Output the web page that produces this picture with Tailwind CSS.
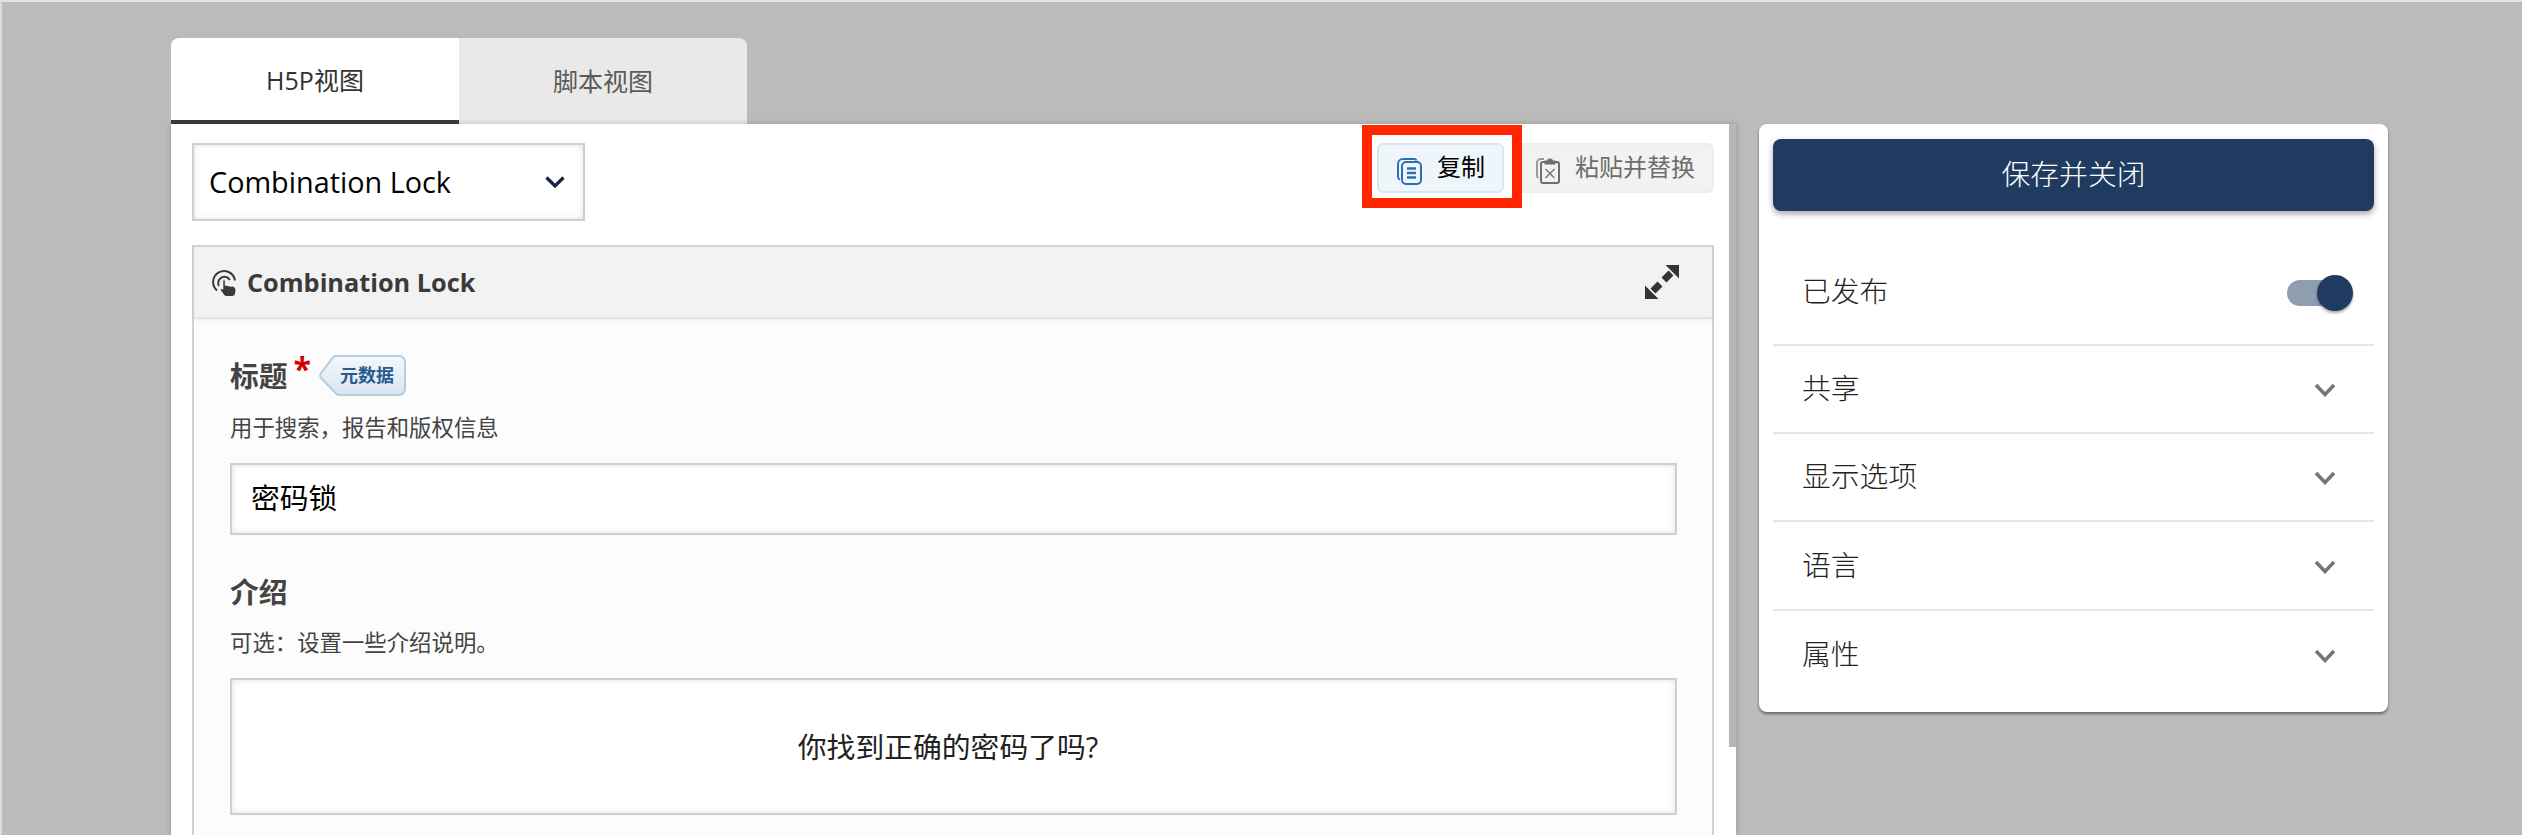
<!DOCTYPE html>
<html lang="zh-CN">
<head>
    <meta charset="UTF-8">
    <meta name="viewport" content="width=device-width, initial-scale=1.0">
    <script src="https://cdn.jsdelivr.net/npm/@tailwindcss/browser@4"></script>
    <title>Combination Lock</title>
</head>
<body class="bg-[#bbbbbb] font-['Open_Sans','Noto_Sans_CJK_SC',sans-serif]">
    <div class="relative flex h-[835px] gap-[23px] overflow-hidden border-l-2 border-t-2 border-l-[#d6dce4] border-t-[#e4e4e4] pl-[169px] pt-[36px]">

        <!-- editor column -->
        <div class="flex w-[1565px] shrink-0 flex-col">
            <div class="flex h-[86px] w-[576px] shrink-0 overflow-hidden rounded-t-lg text-[25px]">
                <div class="flex w-[288px] items-center justify-center border-b-[4px] border-[#3d3d3d] bg-white pt-[4px] text-[#333333]">H5P视图</div>
                <div class="flex w-[288px] items-center justify-center bg-[#e9e9e9] pt-[2px] text-[#5a5a5a]">脚本视图</div>
            </div>

            <div class="relative flex-1 bg-white pl-[21px] pr-[22px] pt-[19px] shadow-[0_0_6px_rgba(0,0,0,0.2)]">
                <div class="absolute right-0 top-0 h-[623px] w-[7px] bg-[#b6b6b6]"></div>

                <div class="flex items-start justify-between">
                    <div class="flex h-[78px] w-[393px] items-center justify-between border-2 border-[#cfcfcf] pl-[15px] pr-[18px] text-[28.800px] text-black shadow-[inset_0_0_6px_rgba(0,0,0,0.12)]">
                        <span>Combination Lock</span>
                        <svg width="20" height="12" viewBox="0 0 20 12" fill="none" stroke="#14263f" stroke-width="3.200"><path d="M1.500 1.500l8.500 8.500 8.500-8.500"/></svg>
                    </div>
                    <div class="flex">
                        <button class="flex h-[50px] w-[127px] items-center rounded-md border-2 border-[#d8e8ea] bg-[#eef6fc] pl-[18px] text-[24px] text-black">
                            <svg class="mt-[6px]" width="25" height="27" viewBox="0 0 25 27" fill="none" stroke="#2c6fb5" stroke-width="2">
                                <path d="M3 21.500A3 3 0 0 1 1 19V6a5 5 0 0 1 5-5h11a3 3 0 0 1 2.600 1.500"/>
                                <rect x="5" y="4" width="19" height="22" rx="4"/>
                                <path d="M10 10.500h9M10 15h9M10 19.500h9" stroke-width="2.400"/>
                            </svg>
                            <span class="mb-[2px] ml-[15px]">复制</span>
                        </button>
                        <button class="ml-[8px] flex h-[50px] w-[202px] items-center rounded-md border-2 border-[#ededed] bg-[#f2f2f2] pl-[22px] text-[24px] text-[#6e6e6e]">
                            <svg class="mt-[5px]" width="25" height="27" viewBox="0 0 25 27" fill="none" stroke="#6e6e6e" stroke-width="2">
                                <path d="M2.500 21A2.500 2.500 0 0 1 1 19V6a4 4 0 0 1 4-4h3" stroke="#9a9a9a"/>
                                <path d="M10 5H7a2 2 0 0 0-2 2v17a2 2 0 0 0 2 2h14a2 2 0 0 0 2-2V7a2 2 0 0 0-2-2h-3"/>
                                <path d="M9.500 6.500h9V4.500h-2.500a2 2 0 0 0-4 0H9.500z" fill="#6e6e6e"/>
                                <path d="M9.500 12l9 9M18.500 12l-9 9" stroke-width="1.200"/>
                            </svg>
                            <span class="mb-[2px] ml-[14px]">粘贴并替换</span>
                        </button>
                    </div>
                </div>

                <div class="mt-[24px] border-x-2 border-t-2 border-[#d2d2d2] bg-[#fcfcfc] pb-[40px]">
                    <div class="flex h-[72px] items-center justify-between border-b-2 border-[#e2e2e2] bg-[#f2f2f2] pl-[18px] pr-[33px] shadow-[0_2px_5px_rgba(0,0,0,0.06)]">
                        <div class="flex items-center gap-[10px] pt-[2px] text-[25.300px] font-bold text-[#3a3a3a]">
                            <svg width="25" height="28" viewBox="0 0 25 28" fill="none" stroke="#3a3a3a" stroke-width="2">
                                <path d="M5 21.500A11 11 0 1 1 23 11.500"/>
                                <path d="M7 17A6 6 0 1 1 17.800 11"/>
                                <path d="M11.300 10.500a1.500 1.500 0 0 1 1.500 1.500v4.500l6.500 1.300a3.200 3.200 0 0 1 4.200 3.200l-.5 3.500a3 3 0 0 1-3 2.500h-5.500a3 3 0 0 1-2.400-1.200l-3.600-5 1-.8 1.800.6v-8.600a1.500 1.500 0 0 1 1.500-1.500z" fill="#3a3a3a" stroke="none"/>
                            </svg>
                            <span>Combination Lock</span>
                        </div>
                        <svg width="34" height="34" viewBox="0 0 34 34" fill="#333333" stroke="none">
                            <path d="M20.500 0H34V13.500z"/>
                            <path d="M0 34V20.500L13.500 34z"/>
                            <path d="M26 8l-7 7M15 19l-7 7" stroke="#333333" stroke-width="7"/>
                        </svg>
                    </div>

                    <div class="pl-[36px] pr-[35px]">
                        <div class="mt-[36px] flex h-[41px] items-center">
                            <span class="text-[28.800px] font-bold text-[#444444]">标题</span>
                            <span class="mb-[14px] ml-[6px] text-[32px] font-bold leading-none text-[#d40000]">*</span>
                            <div class="relative ml-[8px] flex h-[41px] w-[87px] items-center">
                                <svg class="absolute left-0 top-0" width="87" height="41" viewBox="0 0 87 41">
                                    <defs><linearGradient id="tagfill" x1="0" y1="0" x2="0" y2="1"><stop offset="0" stop-color="#f5f8fb"/><stop offset="1" stop-color="#d7e5f1"/></linearGradient></defs>
                                    <path d="M17 1H80a6 6 0 0 1 6 6V34a6 6 0 0 1-6 6H20a5 5 0 0 1-3-1.500L2.500 23.500a4 4 0 0 1 0-6L14 2.500A5 5 0 0 1 17 1z" fill="url(#tagfill)" stroke="#b5cde3" stroke-width="2"/>
                                </svg>
                                <span class="relative ml-[21px] text-[18px] font-bold text-[#2a5a8f]">元数据</span>
                            </div>
                        </div>
                        <p class="mt-[16px] h-[32px] text-[22.400px] leading-[32px] text-[#444444]">用于搜索，报告和版权信息</p>
                        <div class="mt-[19px] flex h-[72px] items-center border-2 border-[#cfcfcf] bg-white pb-[2px] pl-[19px] text-[28.800px] text-black shadow-[inset_0_0_6px_rgba(0,0,0,0.12)]">密码锁</div>

                        <p class="mt-[37px] h-[40px] text-[28.800px] font-bold leading-[40px] text-[#444444]">介绍</p>
                        <p class="mt-[15px] h-[32px] text-[22.400px] leading-[32px] text-[#444444]">可选：设置一些介绍说明。</p>
                        <div class="mt-[19px] flex h-[137px] items-center justify-center border-2 border-[#cfcfcf] bg-white pr-[11px] text-[28.800px] text-[#222222] shadow-[inset_0_0_6px_rgba(0,0,0,0.12)]">你找到正确的密码了吗?</div>
                    </div>
                </div>
            </div>
        </div>

        <!-- sidebar -->
        <div class="mt-[86px] h-[588px] w-[629px] shrink-0 rounded-lg bg-white px-[14px] pt-[15px] font-['Roboto','Noto_Sans_CJK_SC',sans-serif] text-[28.800px] font-light text-[#222222] shadow-[0_2px_3px_rgba(0,0,0,0.45)]">
            <button class="flex h-[72px] w-full items-center justify-center rounded-lg bg-[#1f3c60] pt-[2px] text-white shadow-[0_3px_6px_rgba(0,0,0,0.35)]">保存并关闭</button>
            <div class="mt-[46px] flex h-[89px] items-center justify-between border-b-2 border-[#e6e6e6] pb-[16px] pl-[29px] pr-[33px]">
                <span>已发布</span>
                <div class="relative h-[26px] w-[54px] rounded-full bg-[#8e9eb0]">
                    <div class="absolute right-[-12px] top-[-5px] h-[36px] w-[36px] rounded-full bg-[#1f3c60] shadow-[0_2px_3px_rgba(0,0,0,0.35)]"></div>
                </div>
            </div>
            <div class="flex h-[88px] items-center justify-between border-b-2 border-[#e6e6e6] pl-[29px] pr-[38px] pt-[2px]">
                <span>共享</span>
                <svg width="22" height="14" viewBox="0 0 22 14" fill="none" stroke="#757575" stroke-width="3.500"><path d="M2 2l9 9.500L20 2"/></svg>
            </div>
            <div class="flex h-[88px] items-center justify-between border-b-2 border-[#e6e6e6] pl-[29px] pr-[38px] pt-[2px]">
                <span>显示选项</span>
                <svg width="22" height="14" viewBox="0 0 22 14" fill="none" stroke="#757575" stroke-width="3.500"><path d="M2 2l9 9.500L20 2"/></svg>
            </div>
            <div class="flex h-[89px] items-center justify-between border-b-2 border-[#e6e6e6] pl-[29px] pr-[38px] pt-[2px]">
                <span>语言</span>
                <svg width="22" height="14" viewBox="0 0 22 14" fill="none" stroke="#757575" stroke-width="3.500"><path d="M2 2l9 9.500L20 2"/></svg>
            </div>
            <div class="flex h-[88px] items-center justify-between pl-[29px] pr-[38px] pt-[2px]">
                <span>属性</span>
                <svg width="22" height="14" viewBox="0 0 22 14" fill="none" stroke="#757575" stroke-width="3.500"><path d="M2 2l9 9.500L20 2"/></svg>
            </div>
        </div>

        <!-- red annotation round the copy button -->
        <div class="absolute left-[1360px] top-[123px] h-[83px] w-[160px] border-[10px] border-[#ff2600]"></div>
    </div>
</body>
</html>
